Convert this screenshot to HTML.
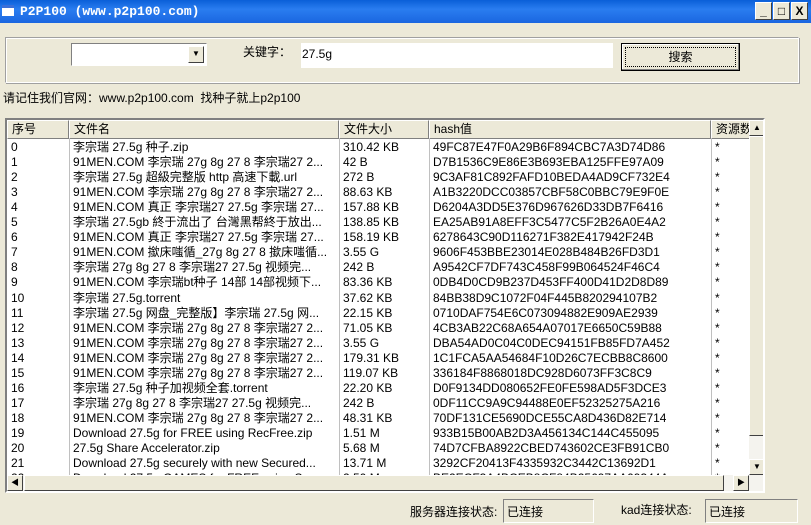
<!DOCTYPE html><html><head><meta charset="utf-8"><style>
*{margin:0;padding:0;box-sizing:border-box}
body{width:811px;height:525px;background:#ece9d8;font-family:"Liberation Sans","Noto Sans CJK SC",sans-serif;font-size:12px;color:#000;position:relative;overflow:hidden}
.a{position:absolute}
.title{left:0;top:0;width:811px;height:23px;background:linear-gradient(#0a5fd8,#2a7df0 40%,#1a66e0);color:#fff;font-family:"Liberation Mono","Noto Sans CJK SC",monospace;font-weight:bold;font-size:13px;line-height:23px;padding-left:20px}
.tb{top:2px;width:17px;height:18px;background:#ece9d8;border:1px solid;border-color:#fff #404040 #404040 #fff;color:#000;font-weight:bold;font-size:12px;text-align:center;line-height:16px}
.sunk{border:1px solid;border-color:#808080 #fff #fff #808080;background:#fff}
.list{left:5px;top:118px;width:760px;height:375px;border:2px solid;border-color:#808080 #fff #fff #808080;background:#fff;overflow:hidden}
.hdr{position:absolute;top:0;height:19px;background:#ece9d8;border:1px solid;border-color:#fff #808080 #808080 #fff;padding-left:4px;line-height:17px}
.row{position:absolute;left:0;height:15px;line-height:15px;white-space:nowrap}
.row span{position:absolute;overflow:hidden}
.row span:after{content:"";}
.vl{position:absolute;top:19px;width:1px;height:337px;background:#c0c0c0}
.sb{background:#ece9d8;border:1px solid;border-color:#fff #404040 #404040 #fff;position:absolute;width:16px;height:16px;font-size:8px;text-align:center;line-height:14px}
</style></head><body>
<div class="a title">P2P100 (www.p2p100.com)</div>
<div class="a" style="left:2px;top:5px;width:12px;height:11px;background:#fff;border-top:3px solid #3a6fd8"></div>
<div class="a tb" style="left:755px">_</div><div class="a tb" style="left:773px">□</div><div class="a tb" style="left:791px">X</div>
<div class="a" style="left:5px;top:37px;width:794px;height:46px;border:1px solid;border-color:#a0a0a0 #fff #fff #a0a0a0;box-shadow:inset 1px 1px #fff,1px 1px #a0a0a0"></div>
<div class="a sunk" style="left:71px;top:43px;width:136px;height:23px"></div>
<div class="a sb" style="left:188px;top:46px;height:17px">▼</div>
<div class="a" style="left:243px;top:43px">关键字：</div>
<div class="a sunk" style="left:301px;top:43px;width:312px;height:25px;border:none;padding:4px 0 0 1px">27.5g</div>
<div class="a" style="left:621px;top:43px;width:119px;height:28px;border:1px solid #000;background:#ece9d8;box-shadow:inset -1px -1px #808080,inset 1px 1px #fff"><div style="position:absolute;left:3px;top:3px;right:3px;bottom:3px;border:1px dotted #000;text-align:center;line-height:18px">搜索</div></div>
<div class="a" style="left:3px;top:89px">请记住我们官网：www.p2p100.com &nbsp;找种子就上p2p100</div>
<div class="a list">
<div class="hdr" style="left:0;width:62px">序号</div>
<div class="hdr" style="left:62px;width:270px">文件名</div>
<div class="hdr" style="left:332px;width:90px">文件大小</div>
<div class="hdr" style="left:422px;width:282px">hash值</div>
<div class="hdr" style="left:704px;width:40px;overflow:hidden;white-space:nowrap">资源数</div>
<div class="vl" style="left:62px"></div><div class="vl" style="left:332px"></div><div class="vl" style="left:422px"></div><div class="vl" style="left:704px"></div>
<div id="rows"></div>
<div class="a" style="left:742px;top:0;width:16px;height:355px;background:#f4f3ee"></div>
<div class="sb" style="left:742px;top:0">▲</div>
<div class="sb" style="left:742px;top:16px;height:300px"></div>
<div class="sb" style="left:742px;top:339px">▼</div>
<div class="a" style="left:0;top:355px;width:758px;height:16px;background:#f4f3ee"></div>
<div class="sb" style="left:0;top:355px">◀</div>
<div class="sb" style="left:17px;top:355px;width:700px"></div>
<div class="sb" style="left:726px;top:355px">▶</div>
</div>
<div class="a" style="left:410px;top:503px">服务器连接状态:</div>
<div class="a" style="left:503px;top:499px;width:91px;height:24px;border:1px solid;border-color:#808080 #fff #fff #808080;padding:3px 0 0 3px">已连接</div>
<div class="a" style="left:621px;top:501px">kad连接状态:</div>
<div class="a" style="left:705px;top:499px;width:93px;height:24px;border:1px solid;border-color:#808080 #fff #fff #808080;padding:3px 0 0 3px">已连接</div>
<script>
var d=[["李宗瑞 27.5g 种子.zip","310.42 KB","49FC87E47F0A29B6F894CBC7A3D74D86"],
["91MEN.COM 李宗瑞 27g 8g 27 8 李宗瑞27 2...","42 B","D7B1536C9E86E3B693EBA125FFE97A09"],
["李宗瑞 27.5g 超級完整版 http 高速下載.url","272 B","9C3AF81C892FAFD10BEDA4AD9CF732E4"],
["91MEN.COM 李宗瑞 27g 8g 27 8 李宗瑞27 2...","88.63 KB","A1B3220DCC03857CBF58C0BBC79E9F0E"],
["91MEN.COM 真正 李宗瑞27 27.5g 李宗瑞 27...","157.88 KB","D6204A3DD5E376D967626D33DB7F6416"],
["李宗瑞 27.5gb 終于流出了 台灣黑帮終于放出...","138.85 KB","EA25AB91A8EFF3C5477C5F2B26A0E4A2"],
["91MEN.COM 真正 李宗瑞27 27.5g 李宗瑞 27...","158.19 KB","6278643C90D116271F382E417942F24B"],
["91MEN.COM 撳床嗤循_27g 8g 27 8 撳床嗤循...","3.55 G","9606F453BBE23014E028B484B26FD3D1"],
["李宗瑞 27g 8g 27 8 李宗瑞27 27.5g 视频完...","242 B","A9542CF7DF743C458F99B064524F46C4"],
["91MEN.COM 李宗瑞bt种子 14部 14部视频下...","83.36 KB","0DB4D0CD9B237D453FF400D41D2D8D89"],
["李宗瑞 27.5g.torrent","37.62 KB","84BB38D9C1072F04F445B820294107B2"],
["李宗瑞 27.5g 网盘_完整版】李宗瑞 27.5g 网...","22.15 KB","0710DAF754E6C073094882E909AE2939"],
["91MEN.COM 李宗瑞 27g 8g 27 8 李宗瑞27 2...","71.05 KB","4CB3AB22C68A654A07017E6650C59B88"],
["91MEN.COM 李宗瑞 27g 8g 27 8 李宗瑞27 2...","3.55 G","DBA54AD0C04C0DEC94151FB85FD7A452"],
["91MEN.COM 李宗瑞 27g 8g 27 8 李宗瑞27 2...","179.31 KB","1C1FCA5AA54684F10D26C7ECBB8C8600"],
["91MEN.COM 李宗瑞 27g 8g 27 8 李宗瑞27 2...","119.07 KB","336184F8868018DC928D6073FF3C8C9"],
["李宗瑞 27.5g 种子加视频全套.torrent","22.20 KB","D0F9134DD080652FE0FE598AD5F3DCE3"],
["李宗瑞 27g 8g 27 8 李宗瑞27 27.5g 视频完...","242 B","0DF11CC9A9C94488E0EF52325275A216"],
["91MEN.COM 李宗瑞 27g 8g 27 8 李宗瑞27 2...","48.31 KB","70DF131CE5690DCE55CA8D436D82E714"],
["Download 27.5g for FREE using RecFree.zip","1.51 M","933B15B00AB2D3A456134C144C455095"],
["27.5g Share Accelerator.zip","5.68 M","74D7CFBA8922CBED743602CE3FB91CB0"],
["Download 27.5g securely with new Secured...","13.71 M","3292CF20413F4335932C3442C13692D1"],
["Download 27.5g GAMES for FREE using S...","2.50 M","BE2ECF3A4BCEB8CF84B25697AA09344A"]];
var h="";d.forEach(function(r,i){h+='<div class="row" style="top:'+(20+i*15.05)+'px"><span style="left:4px">'+i+'</span><span style="left:66px;width:262px">'+r[0]+'</span><span style="left:336px">'+r[1]+'</span><span style="left:426px">'+r[2]+'</span><span style="left:708px">*</span></div>'});
document.getElementById("rows").innerHTML=h;
</script>
</body></html>
